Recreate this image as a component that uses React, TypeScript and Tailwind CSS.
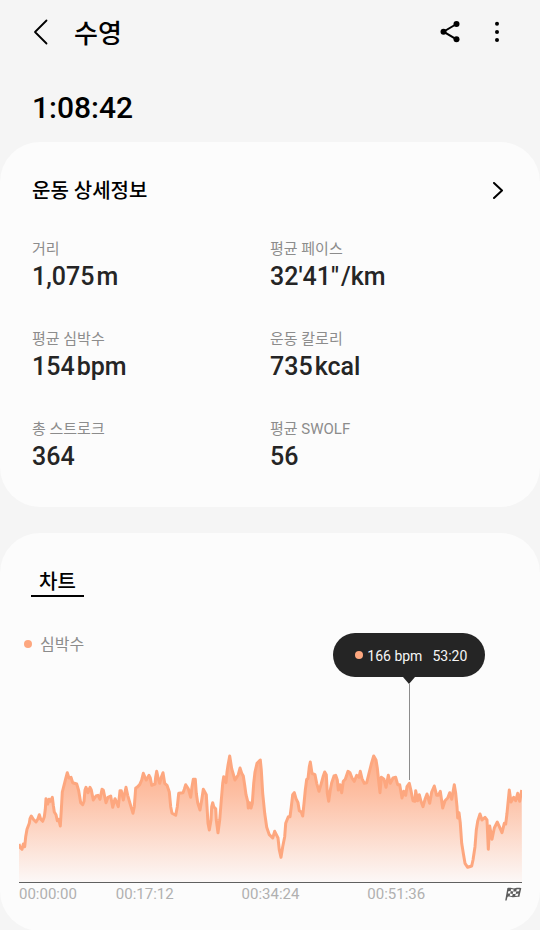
import React from "react";

type Stat = { label: string; value: string; unit?: string };

const stats: Stat[] = [
  { label: "거리", value: "1,075", unit: "m" },
  { label: "평균 페이스", value: "32'41\"", unit: "/km" },
  { label: "평균 심박수", value: "154", unit: "bpm" },
  { label: "운동 칼로리", value: "735", unit: "kcal" },
  { label: "총 스트로크", value: "364" },
  { label: "평균 SWOLF", value: "56" },
];

const WIDTH = 503;
const HEIGHT = 138;

// Heart rate trace by quarter: each quarter has its own start, samples are in thirds of a chart unit.
const quarters: { start: number; samples: number[][] }[] = [
  {
    start: -9,
    samples: [
      [27, 312], [30, 322], [36, 328], [40, 312], [44, 320], [47, 290], [51, 268], [58, 250], [60, 236], [64, 228],
      [70, 238], [78, 246], [84, 236], [88, 224], [92, 238], [98, 244], [103, 230], [106, 208], [108, 176], [113, 192],
      [117, 178], [121, 184], [127, 172], [130, 196], [133, 216], [138, 224], [142, 242], [146, 238], [151, 258],
      [154, 210], [157, 156], [162, 136], [167, 116], [172, 98], [177, 114], [183, 112], [188, 128], [200, 132],
      [206, 152], [212, 188], [218, 194], [222, 184], [225, 150], [228, 142], [234, 158], [240, 142], [244, 150],
      [250, 180], [258, 168], [264, 166], [270, 178], [276, 148], [280, 150], [288, 188], [294, 172], [302, 168],
      [308, 202], [315, 176], [320, 188], [325, 200], [330, 152], [334, 152], [340, 180], [348, 142], [353, 166],
      [360, 190], [369, 220], [373, 200],
    ],
  },
  {
    start: 116,
    samples: [
      [2, 144], [6, 142], [14, 134], [20, 120], [25, 100], [30, 112], [34, 120], [42, 106], [46, 114], [50, 136],
      [60, 132], [62, 110], [65, 94], [70, 116], [74, 130], [79, 112], [84, 98], [89, 130], [96, 136], [103, 156],
      [107, 200], [111, 220], [122, 226], [127, 200], [131, 160], [144, 158], [148, 148], [152, 134], [160, 146],
      [167, 172], [171, 140], [175, 118], [181, 118], [184, 160], [188, 188], [195, 210], [200, 180], [205, 148],
      [214, 164], [216, 200], [219, 250], [223, 270], [228, 240], [230, 200], [233, 188], [236, 200], [242, 206],
      [244, 240], [249, 278], [254, 240], [259, 180], [263, 130], [266, 110], [273, 128], [276, 96], [279, 76],
      [284, 48], [290, 86], [300, 120], [310, 104], [315, 84], [320, 100], [325, 108], [329, 136], [333, 164],
      [338, 184], [340, 204], [344, 188], [348, 204], [352, 190], [356, 130], [360, 96], [366, 70], [374, 62],
    ],
  },
  {
    start: 241,
    samples: [
      [1, 60], [4, 90], [8, 160], [14, 220], [20, 262], [28, 284], [38, 294], [44, 274], [54, 294], [58, 330],
      [63, 352], [68, 320], [74, 290], [77, 250], [85, 230], [90, 230], [94, 200], [98, 164], [103, 158], [108, 176],
      [114, 188], [118, 212], [124, 216], [128, 228], [132, 190], [136, 150], [140, 118], [144, 116], [148, 80],
      [151, 66], [156, 100], [165, 104], [170, 130], [177, 154], [184, 130], [190, 108], [194, 96], [199, 104],
      [202, 160], [206, 184], [211, 150], [215, 128], [222, 108], [227, 106], [232, 120], [235, 150], [240, 134],
      [245, 158], [250, 124], [256, 118], [264, 94], [270, 98], [276, 114], [283, 124], [290, 106], [297, 112],
      [301, 94], [306, 116], [313, 130], [320, 128], [328, 96], [334, 72], [341, 48], [348, 60], [352, 84],
      [356, 124], [360, 158], [364, 112], [372, 118],
    ],
  },
  {
    start: 366,
    samples: [
      [3, 142], [10, 106], [16, 130], [24, 114], [32, 112], [38, 134], [44, 134], [51, 174], [56, 154], [62, 166],
      [66, 140], [73, 130], [78, 152], [84, 182], [90, 184], [92, 152], [98, 182], [103, 164], [108, 184], [114, 200],
      [120, 178], [126, 162], [134, 190], [140, 156], [148, 138], [155, 166], [160, 166], [166, 154], [173, 204],
      [180, 182], [188, 174], [194, 158], [200, 178], [208, 134], [212, 160], [216, 200], [218, 234], [222, 218],
      [226, 250], [230, 310], [235, 340], [240, 370], [248, 382], [260, 378], [264, 360], [270, 320], [274, 270],
      [278, 244], [285, 222], [291, 240], [300, 232], [306, 240], [310, 328], [314, 258], [321, 298], [328, 264],
      [337, 246], [344, 262], [351, 278], [358, 250], [362, 252], [366, 220], [370, 180], [373, 150], [378, 186],
      [386, 172], [392, 182], [398, 160], [404, 184], [410, 150],
    ],
  },
];

const trace = quarters
  .flatMap(({ start, samples }) =>
    samples.map(([x, y]) => `${(start + x / 3).toFixed(1)},${(y / 3 - 4).toFixed(1)}`),
  )
  .join(" ");

function HeartRateChart() {
  return (
    <svg
      viewBox={`0 0 ${WIDTH} ${HEIGHT}`}
      preserveAspectRatio="none"
      className="block h-[138px] w-full"
      role="img"
      aria-label="심박수"
    >
      <defs>
        <linearGradient id="fill" gradientUnits="userSpaceOnUse" x1="0" y1="12" x2="0" y2={HEIGHT}>
          <stop offset="0" stopColor="#fdae89" />
          <stop offset="0.3" stopColor="#fdbfa3" />
          <stop offset="1" stopColor="#fcf8f7" />
        </linearGradient>
      </defs>
      <polygon points={`0,${HEIGHT} ${trace} ${WIDTH},${HEIGHT}`} fill="url(#fill)" />
      <polyline points={trace} fill="none" stroke="#fda77f" strokeWidth="3" strokeLinejoin="round" />
    </svg>
  );
}

function FlagIcon() {
  return (
    <svg width="17" height="14" viewBox="0 0 17 14" aria-hidden="true">
      <path d="M2.400 1C5.500 0 7.500 1.800 10 1.300C12.500 .7 14.500 .7 16.300 1.200L14.300 10C12 9.300 10 10.400 7.500 10.200C5.500 9.800 4 9.300 2.500 9.900L1.600 13.500H.2Z" fill="#5c5c5c" />
      <path
        d="M6.200 1.900L8.700 2.400L8.200 4.600L5.700 4.100ZM11.700 2.200L14.500 2.200L14 4.300L11.200 4.500ZM3.300 4.200L5.700 4.100L5.200 6.600L2.800 6.500ZM8.200 4.600L11.200 4.500L10.700 6.900L7.700 7ZM5.200 6.600L7.700 7L7.200 9.100L4.700 8.700ZM10.700 6.900L13.400 6.500L12.900 8.700L10.200 9Z"
        fill="#fcfcfc"
      />
    </svg>
  );
}

export default function App() {
  return (
    <div className="min-h-screen bg-[#f5f5f5] font-[Roboto,'Noto_Sans_CJK_KR',sans-serif] text-black">
      <header className="flex h-16 items-center pr-10 pl-8">
        <button type="button" aria-label="뒤로" className="flex w-[42px] items-center">
          <svg width="18" height="26" viewBox="0 0 18 26" fill="none" stroke="#000" strokeWidth="1.800">
            <path d="M14.500 1.500L3 13L14.500 24.500" strokeLinecap="round" strokeLinejoin="round" />
          </svg>
        </button>
        <h1 className="flex-1 pt-1 text-[26px] leading-8 font-medium">수영</h1>
        <button type="button" aria-label="공유" className="mr-[34px]">
          <svg width="20" height="22" viewBox="0 0 20 22">
            <path d="M16.500 3L3.500 10.700L16.500 18.300" fill="none" stroke="#000" strokeWidth="2" />
            <circle cx="16.500" cy="3" r="3" />
            <circle cx="3.500" cy="10.700" r="3" />
            <circle cx="16.500" cy="18.300" r="3" />
          </svg>
        </button>
        <button type="button" aria-label="더보기">
          <svg width="6" height="22" viewBox="0 0 6 22">
            <circle cx="3" cy="2.700" r="2" />
            <circle cx="3" cy="10.900" r="2" />
            <circle cx="3" cy="19" r="2" />
          </svg>
        </button>
      </header>

      <main>
        <p className="px-8 pt-[26px] pb-4 text-[30px] leading-9 font-medium">1:08:42</p>

        <section className="rounded-[40px] bg-[#fcfcfc] px-8 pt-[35px] pb-[34px]">
          <div className="flex items-center justify-between">
            <h2 className="text-[20px] leading-7 font-medium">운동 상세정보</h2>
            <button type="button" aria-label="운동 상세정보 열기" className="mr-1">
              <svg width="12" height="18" viewBox="0 0 12 18" fill="none" stroke="#000" strokeWidth="2">
                <path d="M2 1L10 8.500L2 16" strokeLinecap="round" strokeLinejoin="round" />
              </svg>
            </button>
          </div>
          <dl className="mt-[34px] grid grid-cols-2 gap-y-9">
            {stats.map((s) => (
              <div key={s.label}>
                <dt className="text-[15px] leading-5 text-[#8c8c8c]">{s.label}</dt>
                <dd className="mt-0.5 text-[25px] leading-8 font-medium text-[#252525]">
                  {s.value}
                  {s.unit && <span className="ml-0.5">{s.unit}</span>}
                </dd>
              </div>
            ))}
          </dl>
        </section>

        <section className="mt-[26px] rounded-[40px] bg-[#fcfcfc] px-[18px] pt-9 pb-[26px]">
          <button type="button" className="ml-[13px] block border-b-2 border-black px-2 text-[20px] leading-[26px] font-medium">
            차트
          </button>

          <div className="relative mt-9 ml-px">
            <div className="flex h-[22px] items-center gap-2 pl-[5px] text-[16px] text-[#8c8c8c]">
              <span className="size-2 rounded-full bg-[#fda77f]" />
              <span className="pt-0.5">심박수</span>
            </div>
            <div className="mt-[89px] border-b border-[#606060]">
              <HeartRateChart />
            </div>

            <div className="absolute top-0 left-[77.6%] flex -translate-x-1/2 flex-col items-center">
              <div className="flex h-11 w-[152px] items-center rounded-full bg-[#252525] pl-[22px] text-[14px] whitespace-nowrap text-[#f5f5f5]">
                <span className="mr-1 size-2 rounded-full bg-[#fda77f]" />
                <span className="mr-[10px] pt-0.5">166 bpm</span>
                <span className="pt-0.5">53:20</span>
              </div>
              <svg width="12" height="7" viewBox="0 0 12 7" aria-hidden="true">
                <path d="M0 0H12L6 7Z" fill="#252525" />
              </svg>
              <div className="h-24 w-px bg-[#8c8c8c]" />
            </div>
          </div>

          <div className="ml-px grid grid-cols-[1fr_2fr_2fr_2fr_1fr] items-center text-center text-[15px] leading-[22px] text-[#b0b0b0]">
            <span className="text-left">00:00:00</span>
            <span>00:17:12</span>
            <span>00:34:24</span>
            <span>00:51:36</span>
            <span className="flex justify-end">
              <FlagIcon />
            </span>
          </div>
        </section>
      </main>
    </div>
  );
}
